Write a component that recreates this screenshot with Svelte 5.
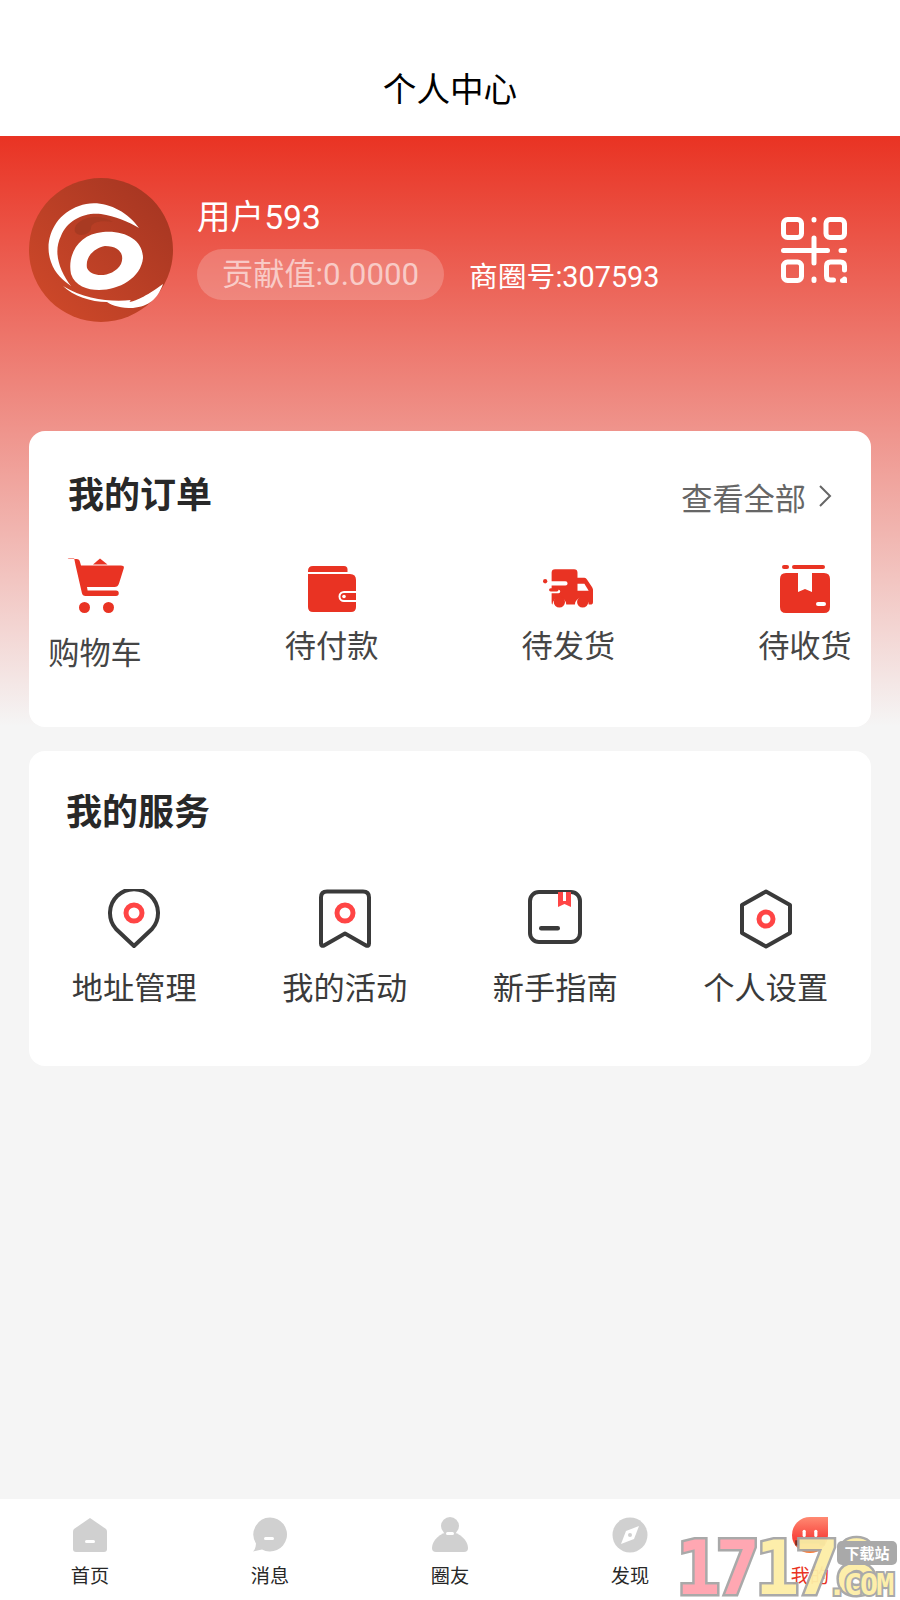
<script>
  // 个人中心 — rpx × 1.2 = px on this 900 wide page
  const orders = [
    { label: "购物车", icon: "cart" },
    { label: "待付款", icon: "wallet" },
    { label: "待发货", icon: "truck" },
    { label: "待收货", icon: "box" },
  ];
  const services = [
    { label: "地址管理", icon: "pin" },
    { label: "我的活动", icon: "flag" },
    { label: "新手指南", icon: "book" },
    { label: "个人设置", icon: "hex" },
  ];
  const tabs = [
    { label: "首页", icon: "home" },
    { label: "消息", icon: "chat" },
    { label: "圈友", icon: "user" },
    { label: "发现", icon: "compass" },
    { label: "我的", icon: "me", active: true },
  ];
</script>

{#snippet glyph(name)}
  {#if name === "cart"}
    <svg class="ico cart" viewBox="0 0 60 56">
      <path d="M4 1h7.500q3 0 3.500 3l1 3.500h40q3.600 0 2.700 3l-4.700 15q-1.100 3.600-4.500 3.600h-27.500l.6 3.400h28.400a2.500 2.500 0 0 1 0 5.500h-30.500q-3 0-3.600-3l-6.400-28-1.300-6.500h-5.700a3 3 0 0 1 0-5.500z" fill="#e93323"/>
      <path d="M28 6.500l7-6 7.500 6z" fill="#e93323"/>
      <circle cx="19.500" cy="49.500" r="5.500" fill="#e93323"/>
      <circle cx="43.500" cy="49.500" r="5.500" fill="#e93323"/>
    </svg>
  {:else if name === "wallet"}
    <svg class="ico" viewBox="0 0 50 48">
      <path d="M1 6q0-5 5-5h31q3.500 0 3.500 3.500v2.500h-39.500z" fill="#e93323"/>
      <path d="M1 9h42q6 0 6 6v11h-12a5.500 5.500 0 0 0 0 11h12v5q0 5-5 5h-38q-5 0-5-5z" fill="#e93323"/>
      <path d="M37 28h12v7h-12a3.500 3.500 0 0 1 0-7z" fill="#e93323"/>
      <circle cx="37" cy="31.500" r="1.800" fill="#fff"/>
    </svg>
  {:else if name === "truck"}
    <svg class="ico" viewBox="0 0 58 48">
      <path d="M10 5q0-4 4-4h22q4 0 4 4v6h8q2 0 3 2l6 9q1 2 1 3v14q0 3-3 3h-2a8 8 0 0 0-16 0h-10a8 8 0 0 0-16 0q-1 0-1-3z" fill="#e93323"/>
      <path d="M40 18h8l5 8h-13z" fill="#fff"/>
      <path d="M5 15h21a1.500 1.500 0 0 1 0 5h-21zM5 25h13a1.500 1.500 0 0 1 0 4h-13z" fill="#fff"/>
      <rect x="6" y="15" width="20" height="3" rx="1.500" fill="#e93323" opacity="0"/>
      <circle cx="2.500" cy="15" r="2.500" fill="#e93323"/>
      <rect x="7" y="23" width="11" height="4" rx="2" fill="#e93323"/>
      <circle cx="19" cy="39" r="6.500" fill="#e93323"/>
      <circle cx="46" cy="39" r="6.500" fill="#e93323"/>
    </svg>
  {:else if name === "box"}
    <svg class="ico" viewBox="0 0 50 48">
      <rect x="2" y="0" width="7" height="4" rx="2" fill="#e93323"/>
      <rect x="12" y="0" width="33" height="4" rx="2" fill="#e93323"/>
      <path d="M6 8h12v19l7-3 7 3v-19h12q6 0 6 6v28q0 6-6 6h-38q-6 0-6-6v-28q0-6 6-6z" fill="#e93323"/>
      <rect x="36" y="37" width="10" height="4" rx="2" fill="#fff"/>
    </svg>
  {:else if name === "pin"}
    <svg class="ico svc" viewBox="0 0 54 60">
      <path d="M27 57l-18-17a24 24 0 1 1 36 0z" fill="none" stroke="#3a3a3a" stroke-width="4" stroke-linejoin="round"/>
      <circle cx="27" cy="24" r="8" fill="none" stroke="#ff4545" stroke-width="5"/>
    </svg>
  {:else if name === "flag"}
    <svg class="ico svc" viewBox="0 0 54 60">
      <path d="M9 2.500h36q6 0 6 6v46q0 3-3 2l-21-12-21 12q-3 1-3-2v-46q0-6 6-6z" fill="none" stroke="#3a3a3a" stroke-width="4" stroke-linejoin="round"/>
      <circle cx="27" cy="24" r="8" fill="none" stroke="#ff4545" stroke-width="5"/>
    </svg>
  {:else if name === "book"}
    <svg class="ico svc" viewBox="0 0 54 60">
      <rect x="2" y="3" width="50" height="50" rx="9" fill="none" stroke="#3a3a3a" stroke-width="4"/>
      <path d="M30 3h13v15l-6.500-3-6.500 3z" fill="#ff4545"/>
      <path d="M35 3h3v9h-3z" fill="#fff"/>
      <rect x="11" y="37" width="21" height="4.500" rx="2.200" fill="#3a3a3a"/>
    </svg>
  {:else if name === "hex"}
    <svg class="ico svc" viewBox="0 0 54 60">
      <path d="M27 2.500l24 13.500v28l-24 13.500-24-13.500v-28z" fill="none" stroke="#3a3a3a" stroke-width="4" stroke-linejoin="round"/>
      <circle cx="27" cy="30" r="7" fill="none" stroke="#ff4545" stroke-width="5"/>
    </svg>
  {:else if name === "home"}
    <svg class="tab-ico" viewBox="0 0 36 36">
      <path d="M18 1l16 11q1 1 1 3v17q0 3-3 3h-28q-3 0-3-3v-17q0-2 1-3z" fill="#d0d0d0"/>
      <rect x="13" y="23" width="10" height="3" rx="1.500" fill="#fff"/>
    </svg>
  {:else if name === "chat"}
    <svg class="tab-ico" viewBox="0 0 36 36">
      <path d="M18 .500a17 17 0 1 1-8 32l-9 2q3-3 3-8a17 17 0 0 1 14-26z" fill="#d0d0d0"/>
      <rect x="12" y="20" width="10" height="3" rx="1.500" fill="#fff"/>
    </svg>
  {:else if name === "user"}
    <svg class="tab-ico" viewBox="0 0 36 36">
      <circle cx="18" cy="9" r="9" fill="#d0d0d0"/>
      <path d="M18 15c10 0 18 9 18 16q0 4-4 4h-28q-4 0-4-4c0-7 8-16 18-16z" fill="#d0d0d0"/>
      <rect x="14" y="15" width="8" height="3" rx="1.500" fill="#fff"/>
    </svg>
  {:else if name === "compass"}
    <svg class="tab-ico" viewBox="0 0 36 36">
      <circle cx="18" cy="18" r="17.500" fill="#d0d0d0"/>
      <path d="M27 9l-13 5-5 13 13-5z" fill="#fff"/>
      <circle cx="18" cy="18" r="2" fill="#d0d0d0"/>
    </svg>
  {:else if name === "me"}
    <svg class="tab-ico" viewBox="0 0 34 34">
      <defs>
        <linearGradient id="meFill" x1="0" y1="0" x2="0" y2="1">
          <stop offset="0" stop-color="#ff8a72"/>
          <stop offset=".6" stop-color="#f8433c"/>
          <stop offset="1" stop-color="#ff7a2e"/>
        </linearGradient>
      </defs>
      <path d="M17 0h17v17a17 17 0 1 1-17-17z" fill="url(#meFill)"/>
      <rect x="10" y="12" width="3" height="7" rx="1.500" fill="#fff"/>
      <rect x="21" y="12" width="3" height="7" rx="1.500" fill="#fff"/>
      <path d="M3 22h28v5h-5v-2h-18v2h-5z" fill="#7c2b22"/>
    </svg>
  {/if}
{/snippet}

<div class="page">
  <header class="topbar">个人中心</header>

  <div class="hero">
    <section class="profile">
      <div class="avatar">
        <svg viewBox="0 0 144 144" width="144" height="144">
          <defs>
            <linearGradient id="avatarFill" x1="0" y1="1" x2="1" y2="0">
              <stop offset="0" stop-color="#d24a2a"/>
              <stop offset="1" stop-color="#a23421"/>
            </linearGradient>
          </defs>
          <circle cx="72" cy="72" r="72" fill="url(#avatarFill)"/>
          <path d="M110 50C96 30 70 20 50 28C26 36 14 62 22 84C26 96 34 102 42 108C30 92 24 74 32 58C38 42 56 34 72 36C86 38 100 44 110 50z" fill="#fff"/>
          <path d="M42 44C50 36 66 38 74 42C62 40 56 44 56 50C54 56 48 60 44 58C40 54 40 48 42 44z" fill="#fff" opacity=".0"/>
          <path d="M48 46C56 38 72 36 84 44C72 42 62 44 62 50C62 56 50 60 46 54C45 52 46 48 48 46z" fill="#a83a22"/>
          <path d="M42 96C38 76 50 56 74 54C96 52 114 62 114 80C112 100 90 112 70 112C58 112 46 108 42 96zM58 90C62 100 84 100 92 86C96 76 90 68 76 68C66 70 56 78 58 90z" fill="#fff" fill-rule="evenodd"/>
          <path d="M34 108C56 122 84 124 102 122C96 126 110 124 134 106C128 122 120 128 104 130C92 130 84 128 78 124C62 124 44 118 34 108z" fill="#fff"/>
        </svg>
      </div>
      <div class="who">
        <div class="name">用户593</div>
        <div class="stats">
          <span class="pill">贡献值:0.0000</span>
          <span class="circle-no">商圈号:307593</span>
        </div>
      </div>
      <svg class="qr" viewBox="0 0 66 66" fill="none" stroke="#fff" stroke-width="5" stroke-linecap="round">
        <rect x="2.500" y="2.500" width="18" height="18" rx="4"/>
        <rect x="45" y="2.500" width="18.500" height="18" rx="4"/>
        <rect x="2.500" y="45" width="18" height="18.500" rx="4"/>
        <path d="M33 2.500v.5M33 21v25M33 62v1.500M2.500 33.500h44M60 33.500h3.500"/>
        <path d="M63.500 53v-4q0-4-4-4h-10q-4 0-4 4v10q0 4 4 4h3M63.500 62v1.500h-2"/>
      </svg>
    </section>

    <section class="card orders">
      <div class="card-head">
        <h2>我的订单</h2>
        <span class="more">查看全部
          <svg width="14" height="24" viewBox="0 0 14 24" fill="none" stroke="#666" stroke-width="2"><path d="M2 2l10 10-10 10"/></svg>
        </span>
      </div>
      <div class="order-row">
        {#each orders as o}
          <div class="order" class:first={o.icon === "cart"}>
            {@render glyph(o.icon)}
            <span>{o.label}</span>
          </div>
        {/each}
      </div>
    </section>

    <section class="card services">
      <h2>我的服务</h2>
      <div class="service-row">
        {#each services as s}
          <div class="service">
            {@render glyph(s.icon)}
            <span>{s.label}</span>
          </div>
        {/each}
      </div>
    </section>
  </div>

  <nav class="tabbar">
    {#each tabs as t}
      <div class="tab" class:active={t.active}>
        {@render glyph(t.icon)}
        <span>{t.label}</span>
      </div>
    {/each}
  </nav>

  <div class="watermark" aria-hidden="true">
    <span class="digits"><b class="pink">17</b><b class="yellow">178</b></span>
    <span class="dl">下载站</span>
    <span class="com">.COM</span>
  </div>
</div>

<style>
  :global(body) {
    margin: 0;
    background: #f5f5f5;
  }
  .page {
    position: relative;
    width: 900px;
    height: 1600px;
    overflow: hidden;
    display: flex;
    flex-direction: column;
    background: #f5f5f5;
    font-family: Roboto, "Noto Sans CJK SC", sans-serif;
  }
  .topbar {
    height: 136px;
    box-sizing: border-box;
    padding-top: 70px;
    text-align: center;
    font-size: 33.6px;
    line-height: 42px;
    color: #000;
    background: #fff;
  }
  .hero {
    flex: 1;
    padding: 42px 29px 0;
    background: linear-gradient(180deg, #e93323 0, #f5f5f5 590px);
    background-repeat: no-repeat;
  }
  .profile {
    display: flex;
    align-items: center;
    height: 144px;
    color: #fff;
    margin-bottom: 109px;
  }
  .avatar {
    width: 144px;
    height: 144px;
    flex: none;
  }
  .who {
    margin-left: 24px;
    flex: 1;
  }
  .name {
    font-size: 33.6px;
    line-height: 42px;
    margin-top: -4px;
    margin-bottom: 10px;
  }
  .stats {
    display: flex;
    align-items: center;
  }
  .pill {
    height: 51px;
    line-height: 51px;
    padding: 0 25px;
    font-size: 31.200px;
    border-radius: 26px;
    background: rgba(255, 255, 255, 0.2);
    color: rgba(255, 255, 255, 0.6);
  }
  .circle-no {
    margin-left: 25px;
    font-size: 28.800px;
  }
  .qr {
    width: 66px;
    height: 66px;
    flex: none;
    margin-right: 24px;
  }
  .card {
    background: #fff;
    border-radius: 16px;
  }
  h2 {
    margin: 0;
    font-size: 36px;
    line-height: 48px;
    font-weight: 700;
    color: #282828;
  }
  .orders {
    height: 296px;
    margin-bottom: 24px;
    box-sizing: border-box;
    padding: 41px 19px 0;
  }
  .card-head {
    display: flex;
    justify-content: space-between;
    align-items: center;
    padding: 0 20px;
  }
  .more {
    display: flex;
    align-items: center;
    gap: 12px;
    font-size: 31.200px;
    color: #666;
  }
  .order-row {
    display: flex;
    justify-content: space-between;
    margin-top: 38px;
  }
  .order {
    width: 94px;
    height: 120px;
    display: flex;
    flex-direction: column;
    align-items: center;
    font-size: 31.200px;
    color: #454545;
    line-height: 40px;
    white-space: nowrap;
  }
  .ico {
    width: 50px;
    height: 48px;
    margin-top: 7px;
    margin-bottom: 14px;
    flex: none;
  }
  .ico.cart {
    width: 60px;
    height: 56px;
    margin-top: 0;
    margin-bottom: 20px;
  }
  .services {
    height: 315px;
    box-sizing: border-box;
    padding-top: 38px;
  }
  .services h2 {
    padding-left: 37px;
  }
  .service-row {
    display: flex;
    margin-top: 52px;
  }
  .service {
    flex: 0 0 25%;
    display: flex;
    flex-direction: column;
    align-items: center;
    font-size: 31.200px;
    color: #3a3a3a;
    line-height: 40px;
  }
  .ico.svc {
    width: 54px;
    height: 60px;
    margin: 0 0 20px;
  }
  .tabbar {
    height: 101px;
    flex: none;
    display: flex;
    background: #fff;
  }
  .tab {
    flex: 1;
    padding-top: 18px;
    display: flex;
    flex-direction: column;
    align-items: center;
    font-size: 19.200px;
    line-height: 24px;
    color: #282828;
  }
  .tab-ico {
    width: 36px;
    height: 36px;
    margin-bottom: 12px;
  }
  .tab.active {
    color: #e93323;
  }
  .watermark {
    position: absolute;
    left: 676px;
    top: 1536px;
    width: 224px;
    height: 64px;
    font-family: "DejaVu Sans Mono", monospace;
    opacity: 0.95;
  }
  .digits {
    position: absolute;
    left: 0;
    top: -8px;
    font-size: 74px;
    line-height: 80px;
    letter-spacing: -5px;
    white-space: nowrap;
    -webkit-text-stroke: 5px #a5a5a5;
    paint-order: stroke fill;
  }
  .digits b { font-weight: 700; }
  .pink { color: #ffa3ae; }
  .yellow { color: #fdeea6; }
  .dl {
    position: absolute;
    left: 161px;
    top: 5px;
    width: 60px;
    height: 24px;
    line-height: 24px;
    text-align: center;
    font-family: "Noto Sans CJK SC", sans-serif;
    font-size: 15px;
    font-weight: 700;
    color: #fff;
    background: #a5a5a5;
    border-radius: 5px;
  }
  .com {
    position: absolute;
    left: 152px;
    top: 34px;
    font-size: 30px;
    line-height: 30px;
    font-weight: 700;
    letter-spacing: -2px;
    color: #fdeea6;
    -webkit-text-stroke: 4px #a5a5a5;
    paint-order: stroke fill;
  }
</style>
